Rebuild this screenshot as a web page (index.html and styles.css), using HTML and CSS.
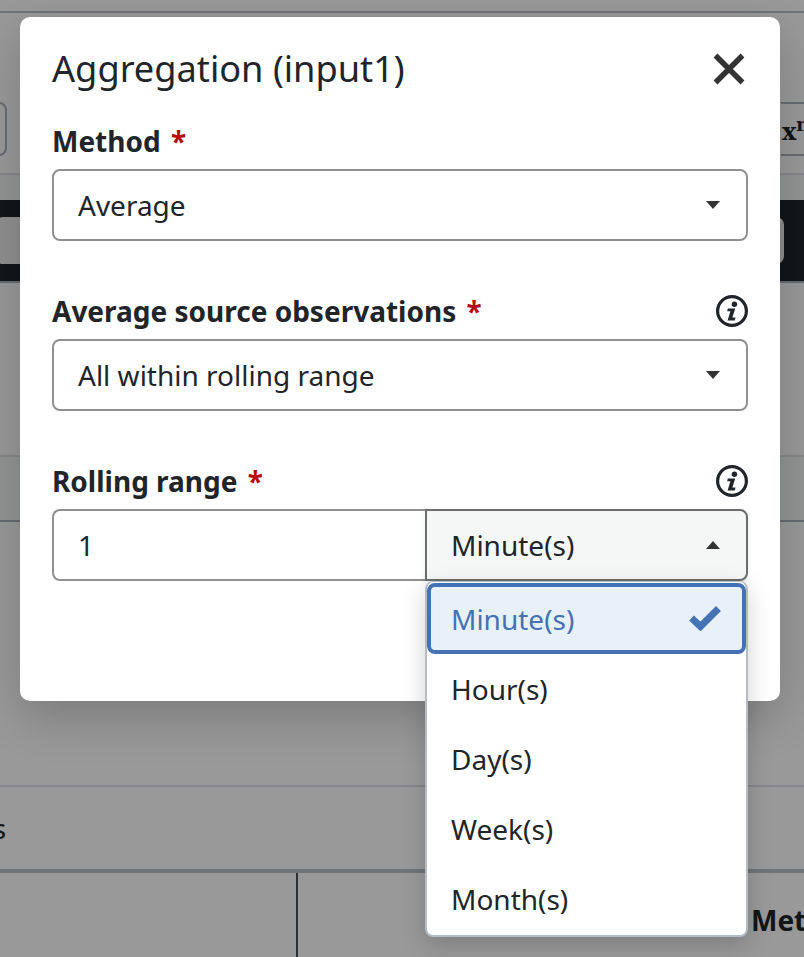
FILE: index.html
```html
<!DOCTYPE html>
<html lang="en">
<head>
    <meta charset="UTF-8">
    <meta name="viewport" content="width=device-width, initial-scale=1.0">
    <title>Aggregation (input1)</title>
    <link rel="stylesheet" href="styles.css">
</head>
<body>
    <div class="page">
        <div class="topbar"></div>
        <div class="toolbar">
            <div class="tool-box"></div>
            <div class="tool-power">x<sup>n</sup></div>
        </div>
        <div class="toolbar-foot"></div>
        <div class="formula-row">
            <div class="formula-input"></div>
        </div>
        <div class="blank-row"></div>
        <div class="tint-row"></div>
        <div class="gap-row"></div>
        <div class="tab-row"><span class="tab-text">Series</span></div>
        <div class="table-head">
            <div class="head-cell head-first"></div>
            <div class="head-cell head-last">Method</div>
        </div>
    </div>

    <div class="overlay">
        <div class="modal">
            <div class="modal-header">
                <h1 class="modal-title">Aggregation (input1)</h1>
                <button class="close-btn" type="button" aria-label="Close">
                    <svg width="32" height="32" viewBox="0 0 32 32"><path d="M2.5 2.5 L29.5 29.5 M29.5 2.5 L2.5 29.5" stroke="#333" stroke-width="5.5" fill="none"/></svg>
                </button>
            </div>

            <div class="field">
                <div class="label-row">
                    <label class="field-label">Method <span class="req">*</span></label>
                </div>
                <button class="select" type="button">
                    <span>Average</span>
                    <svg class="caret" width="14" height="8" viewBox="0 0 14 8"><path d="M0 0 H14 L7 8 Z" fill="#333"/></svg>
                </button>
            </div>

            <div class="field">
                <div class="label-row">
                    <label class="field-label">Average source observations <span class="req">*</span></label>
                    <svg class="info" width="32" height="32" viewBox="0 0 32 32"><circle cx="16" cy="16" r="14.4" fill="none" stroke="#212529" stroke-width="3.2"/><circle cx="18.4" cy="9.2" r="2.7" fill="#212529"/><path d="M11.8 13.6 H19.2 L16.4 22.6 H19.6 L18.7 25.4 H11.6 L14.4 16.2 H11.2 Z" fill="#212529"/></svg>
                </div>
                <button class="select" type="button">
                    <span>All within rolling range</span>
                    <svg class="caret" width="14" height="8" viewBox="0 0 14 8"><path d="M0 0 H14 L7 8 Z" fill="#333"/></svg>
                </button>
            </div>

            <div class="field">
                <div class="label-row">
                    <label class="field-label">Rolling range <span class="req">*</span></label>
                    <svg class="info" width="32" height="32" viewBox="0 0 32 32"><circle cx="16" cy="16" r="14.4" fill="none" stroke="#212529" stroke-width="3.2"/><circle cx="18.4" cy="9.2" r="2.7" fill="#212529"/><path d="M11.8 13.6 H19.2 L16.4 22.6 H19.6 L18.7 25.4 H11.6 L14.4 16.2 H11.2 Z" fill="#212529"/></svg>
                </div>
                <div class="input-group">
                    <input class="number-input" type="text" value="1">
                    <div class="unit-wrap">
                        <button class="select select-open" type="button">
                            <span>Minute(s)</span>
                            <svg class="caret" width="14" height="8" viewBox="0 0 14 8"><path d="M0 8 H14 L7 0 Z" fill="#333"/></svg>
                        </button>
                        <ul class="menu">
                            <li class="menu-item selected">
                                <span>Minute(s)</span>
                                <svg width="32" height="25" viewBox="0 0 32 25"><path d="M2.5 12 L11.5 20.5 L29.5 2.5" stroke="#4472b4" stroke-width="7" fill="none"/></svg>
                            </li>
                            <li class="menu-item">Hour(s)</li>
                            <li class="menu-item">Day(s)</li>
                            <li class="menu-item">Week(s)</li>
                            <li class="menu-item">Month(s)</li>
                        </ul>
                    </div>
                </div>
            </div>
        </div>
    </div>
</body>
</html>
```

FILE: styles.css
```css
/* styles.css */

* {
    box-sizing: border-box;
}

html,
body {
    margin: 0;
    padding: 0;
    height: 100%;
}

body {
    font-family: "Noto Sans", "Liberation Sans", sans-serif;
    color: #212529;
    background-color: #fff;
    overflow: hidden;
    position: relative;
}

/* page behind the modal */
.page {
    height: 957px;
    display: flex;
    flex-direction: column;
    overflow: hidden;
}

.topbar {
    height: 13px;
    border-bottom: 2px solid #bcc2c7;
}

.toolbar {
    height: 162px;
    padding-top: 89px;
    display: flex;
    justify-content: space-between;
    align-items: flex-start;
    border-bottom: 2px solid #dee2e6;
}

.tool-box {
    width: 40px;
    height: 54px;
    margin-left: -33px;
    border: 2px solid #adb5bd;
    border-radius: 8px;
}

.tool-power {
    width: 80px;
    height: 54px;
    margin-right: -57px;
    padding-left: 1px;
    border-top: 2px solid #adb5bd;
    border-bottom: 2px solid #adb5bd;
    font-family: "DejaVu Serif", "Liberation Serif", serif;
    font-weight: bold;
    font-size: 24px;
    line-height: 56px;
    white-space: nowrap;
}

.tool-power sup {
    font-size: 18px;
    line-height: 0;
}

.toolbar-foot {
    height: 25px;
    background-color: #f5f7f7;
}

.formula-row {
    height: 83px;
    padding-top: 17px;
    background-color: #212529;
    border-bottom: 2px solid #adb5bd;
}

.formula-input {
    width: 789px;
    height: 47px;
    margin-left: -5px;
    background-color: #f0f0f0;
    border-radius: 8px;
}

.blank-row {
    height: 174px;
    border-bottom: 2px solid #dee2e6;
}

.tint-row {
    height: 65px;
    background-color: #f5f7f7;
    border-bottom: 2px solid #adb5bd;
}

.gap-row {
    height: 265px;
    border-bottom: 2px solid #dee2e6;
}

.tab-row {
    height: 86px;
    padding-bottom: 0;
    display: flex;
    align-items: center;
    font-size: 28px;
    border-bottom: 4px solid #bcc2c7;
}

.tab-text {
    margin-left: -73px;
}

.table-head {
    flex: 1;
    display: flex;
}

.head-cell {
    font-weight: bold;
    font-size: 28px;
}

.head-first {
    flex: none;
    width: 298px;
    border-right: 2px solid #495057;
}

.head-last {
    flex: 1;
    padding: 28px 0 0 453px;
    white-space: nowrap;
}

/* modal */
.overlay {
    position: absolute;
    top: 0;
    left: 0;
    right: 0;
    bottom: 0;
    padding: 17px 24px 0 20px;
    background-color: rgba(0, 0, 0, 0.4);
}

.modal {
    height: 684px;
    padding: 0 32px;
    background-color: #fff;
    border-radius: 10px;
    box-shadow: 0 16px 48px rgba(0, 0, 0, 0.2);
}

.modal-header {
    height: 102px;
    display: flex;
    justify-content: space-between;
    align-items: flex-start;
}

.modal-title {
    margin: 24px 0 0;
    font-size: 36.2px;
    font-weight: normal;
    line-height: 54px;
}

.close-btn {
    margin: 36px 3px 0 0;
    padding: 0;
    border: none;
    background: none;
    line-height: 0;
}

.field {
    height: 170px;
}

.label-row {
    height: 44px;
    margin-bottom: 6px;
    display: flex;
    justify-content: space-between;
    align-items: center;
}

.field-label {
    font-size: 28px;
    font-weight: bold;
    line-height: 44px;
}

.req {
    color: #b50909;
    margin-left: 3px;
}

.select {
    width: 100%;
    height: 72px;
    padding: 0 26px 0 24px;
    display: flex;
    justify-content: space-between;
    align-items: center;
    font-family: inherit;
    font-size: 28px;
    color: #212529;
    background-color: #fff;
    border: 2px solid #909090;
    border-radius: 8px;
}

.input-group {
    display: flex;
}

.number-input {
    width: 373px;
    height: 72px;
    padding: 0 24px;
    font-family: inherit;
    font-size: 28px;
    color: #212529;
    background-color: #fff;
    border: 2px solid #909090;
    border-right: none;
    border-radius: 8px 0 0 8px;
    outline: none;
}

.unit-wrap {
    flex: 1;
    position: relative;
}

.select-open {
    background-color: #f5f7f7;
    border-color: #6c6c6c;
    border-radius: 0 8px 8px 0;
    box-shadow: 0 2px 6px rgba(0, 0, 0, 0.08);
}

.menu {
    position: absolute;
    top: 72px;
    left: 0;
    right: 0;
    margin: 0;
    padding: 1px 0;
    list-style: none;
    background-color: #fff;
    border: 2px solid #b5bcc4;
    border-top-width: 1px;
    border-radius: 8px;
    box-shadow: 0 8px 24px rgba(0, 0, 0, 0.18);
}

.menu-item {
    height: 70px;
    padding: 0 24px;
    display: flex;
    justify-content: space-between;
    align-items: center;
    font-size: 28px;
}

.menu-item.selected {
    height: 71px;
    padding: 0 21px 0 20px;
    color: #4472b4;
    background-color: #e8f1fa;
    border: 4px solid #4472b4;
    border-radius: 8px;
}
```
